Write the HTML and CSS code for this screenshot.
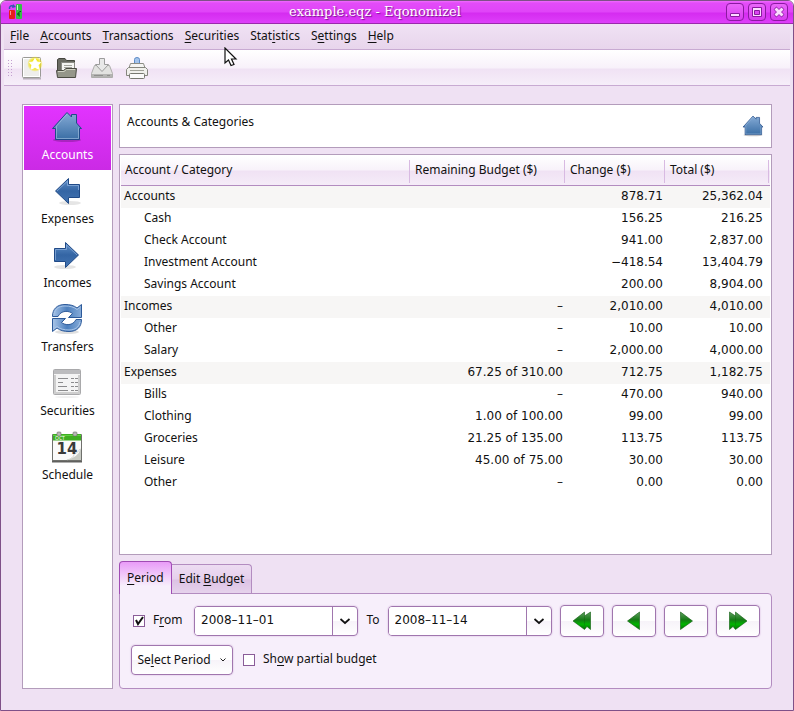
FILE: index.html
```html
<!DOCTYPE html>
<html lang="en">
<head>
  <meta charset="UTF-8">
  <meta name="viewport" content="width=device-width, initial-scale=1.0">
  <title>example.eqz - Eqonomize!</title>
  <link rel="stylesheet" href="styles.css">
</head>
<body>
  <!-- Shared gradients and shapes -->
  <svg class="defs" width="0" height="0" aria-hidden="true">
    <defs>
      <linearGradient id="blue" x1="0" y1="0" x2="0" y2="1">
        <stop offset="0" stop-color="#86abd6"/>
        <stop offset="1" stop-color="#3a6ea5"/>
      </linearGradient>
      <linearGradient id="arrowBlue" x1="0" y1="0" x2="0" y2="1">
        <stop offset="0" stop-color="#5f8fc8"/>
        <stop offset="0.5" stop-color="#3465a4"/>
        <stop offset="1" stop-color="#4374b2"/>
      </linearGradient>
      <linearGradient id="swirlBlue" x1="0" y1="0" x2="1" y2="0">
        <stop offset="0" stop-color="#a9c5e8"/>
        <stop offset="0.5" stop-color="#4d80be"/>
        <stop offset="1" stop-color="#86abd8"/>
      </linearGradient>
      <linearGradient id="green" x1="0" y1="0" x2="0" y2="1">
        <stop offset="0" stop-color="#5f9e5f"/>
        <stop offset="0.45" stop-color="#157a15"/>
        <stop offset="0.7" stop-color="#00b400"/>
        <stop offset="1" stop-color="#067006"/>
      </linearGradient>
      <radialGradient id="glow">
        <stop offset="0.6" stop-color="#f3e51c"/>
        <stop offset="1" stop-color="#f3e51c" stop-opacity="0.2"/>
      </radialGradient>
      <symbol id="home" viewBox="0 0 32 32">
        <ellipse cx="16" cy="29" rx="14" ry="2" fill="#000" opacity="0.2"/>
        <path d="M16 1.500L1.500 17.500H4.500V28.500H28.500V17.500H30.500L25.500 12V3.500H20.500V6Z" fill="url(#blue)" stroke="#204a87" stroke-linejoin="round"/>
        <path d="M16 3L5.500 15V27.500H27.500V16.500" fill="none" stroke="#a9c4e4" opacity="0.6"/>
      </symbol>
    </defs>
  </svg>

  <div class="window">
    <header class="titlebar">
      <svg class="app-icon" width="16" height="16" viewBox="0 0 16 16" aria-hidden="true">
        <path d="M1.500 5C1 2 3 1 6 2.500" fill="none" stroke="#3555b0" stroke-width="1.500"/>
        <path d="M5 0L8 3L4 4Z" fill="#3555b0"/>
        <rect x="1" y="6" width="6" height="9" rx="1" fill="#e81c1c"/>
        <path d="M2.500 7V11" stroke="#ff9090"/>
        <rect x="8" y="0" width="6" height="15" rx="1" fill="#35c048"/>
        <path d="M13 7.500C10 7 9 12 12 12M9 10H12" fill="none" stroke="#0a4a18"/>
        <path d="M9.500 1V6" stroke="#c0ffc8"/>
      </svg>
      <h1>example.eqz - Eqonomizel</h1>
      <div class="window-buttons">
        <button type="button" aria-label="Minimize">
          <svg width="16" height="16" viewBox="0 0 16 16"><path d="M3.500 9.500H12.500V12.500H3.500Z" fill="#fbdcff" stroke="#8a1aa0"/></svg>
        </button>
        <button type="button" aria-label="Maximize">
          <svg width="16" height="16" viewBox="0 0 16 16"><path d="M3.500 3.500H12.500V12.500H3.500Z" fill="#fbdcff" stroke="#8a1aa0"/><path d="M5.500 6.500H10.500V10.500H5.500Z" fill="#dc44f2" stroke="#8a1aa0"/></svg>
        </button>
        <button type="button" aria-label="Close">
          <svg width="16" height="16" viewBox="0 0 16 16"><path d="M4 4L12 12M12 4L4 12" stroke="#8a1aa0" stroke-width="4"/><path d="M4.500 4.500L11.500 11.500M11.500 4.500L4.500 11.500" stroke="#fbdcff" stroke-width="3"/></svg>
        </button>
      </div>
    </header>

    <nav class="menubar">
      <a href="#"><u>F</u>ile</a>
      <a href="#"><u>A</u>ccounts</a>
      <a href="#"><u>T</u>ransactions</a>
      <a href="#"><u>S</u>ecurities</a>
      <a href="#">Stat<u>i</u>stics</a>
      <a href="#">S<u>e</u>ttings</a>
      <a href="#"><u>H</u>elp</a>
    </nav>

    <div class="toolbar">
      <span class="grip"></span>
      <button type="button" aria-label="New">
        <svg width="24" height="24" viewBox="0 0 24 24">
          <path d="M3 22.500H21" stroke="#000" opacity="0.25" stroke-width="2"/>
          <rect x="2.500" y="1.500" width="18" height="20" rx="1" fill="#eeeeec" stroke="#9a9a96"/>
          <rect x="3.500" y="2.500" width="16" height="18" fill="none" stroke="#fff"/>
          <circle cx="15" cy="8" r="7.500" fill="url(#glow)"/>
          <path d="M15 2.500L17 6L20.500 6.500L18.200 9.200L18.700 13L15 11.500L11.300 13L11.800 9.200L9.500 6.500L13 6Z" fill="#fff" stroke="#fff" stroke-linejoin="round"/>
        </svg>
      </button>
      <button type="button" aria-label="Open">
        <svg width="24" height="24" viewBox="0 0 24 24">
          <path d="M2.500 20V3.500L4 2.500H10L11.500 4.500H19.500V16H2.500" fill="#6b6c64" stroke="#45463f"/>
          <rect x="6.500" y="6.500" width="13" height="9" fill="#f4f4f2" stroke="#8a8a84"/>
          <path d="M9 9.500H17M9 11.500H17" stroke="#a4a49e"/>
          <path d="M1.500 14.500H8.500L11 12.500H21.500L20.500 21.500H2.500Z" fill="#95968a" stroke="#4a4b42" stroke-linejoin="round"/>
          <path d="M3 15.500H9L11.500 13.500H20" fill="none" stroke="#d0d1c4"/>
        </svg>
      </button>
      <button type="button" aria-label="Save" disabled>
        <svg width="24" height="24" viewBox="0 0 24 24">
          <path d="M4.500 9.500H19.500L22.500 17.500V21.500H1.500V17.500Z" fill="#e2e2e0" stroke="#adadab" stroke-linejoin="round"/>
          <path d="M2 18H22V21H2Z" fill="#b4b4b2"/>
          <path d="M4 19.500H13M17 19.500H20" stroke="#8f8f8d"/>
          <path d="M9.500 2.500H14.500V8.500H18.500L12 15.500L5.500 8.500H9.500Z" fill="#e8e8e8" stroke="#9c9c9c"/>
        </svg>
      </button>
      <button type="button" aria-label="Print">
        <svg width="24" height="24" viewBox="0 0 24 24">
          <path d="M9.500 8V3.500Q9.500 1.500 12 1.500Q14.500 1.500 14.500 3.500V8Z" fill="#a4c4ec" stroke="#5e8cc6"/>
          <path d="M5.500 7.500H18.500L20 12H4Z" fill="#f5f5f3" stroke="#8c8d85"/>
          <path d="M3.500 11.500H20.500L22.500 13.500V19.500H1.500V13.500Z" fill="#f0f0ec" stroke="#85867e" stroke-linejoin="round"/>
          <path d="M5 14.500H19" stroke="#a0a198"/>
          <rect x="4.500" y="17.500" width="15" height="5" rx="1" fill="#fafafa" stroke="#777870"/>
        </svg>
      </button>
    </div>

    <main class="workspace">
      <nav class="sidebar">
        <a href="#" class="active">
          <svg width="32" height="32"><use href="#home"/></svg>
          Accounts
        </a>
        <a href="#">
          <svg width="32" height="32" viewBox="0 0 32 32">
            <ellipse cx="19" cy="28" rx="11" ry="2" fill="#000" opacity="0.1"/>
            <path d="M4.500 16L17.500 3.500V9.500H28.500V22.500H17.500V28.500Z" fill="url(#arrowBlue)" stroke="#204a87" stroke-linejoin="round"/>
            <path d="M6 16L16.500 6V10.500H27.500V15" fill="none" stroke="#8fb2de" opacity="0.7"/>
          </svg>
          Expenses
        </a>
        <a href="#">
          <svg width="32" height="32" viewBox="0 0 32 32">
            <ellipse cx="14" cy="28" rx="11" ry="2" fill="#000" opacity="0.1"/>
            <path d="M27.500 16L14.500 3.500V9.500H3.500V22.500H14.500V28.500Z" fill="url(#arrowBlue)" stroke="#204a87" stroke-linejoin="round"/>
            <path d="M26 16L15.500 6V10.500H4.500V21" fill="none" stroke="#8fb2de" opacity="0.7"/>
          </svg>
          Incomes
        </a>
        <a href="#">
          <svg width="32" height="32" viewBox="0 0 32 32">
            <ellipse cx="16" cy="29" rx="12" ry="2" fill="#000" opacity="0.12"/>
            <path d="M1.500 13.500C1.500 6 6 1.500 14 1.500C19 1.500 23 2.500 26 5L30.500 1.500V14.500H17.500L21.500 10.500C18 7.500 10 7 7 13.500Z" fill="url(#swirlBlue)" stroke="#2d5a9a" stroke-linejoin="round"/>
            <path d="M3 11C4 6 8 3 14 3C19 3 23 4 26 6.500L29.500 4" fill="none" stroke="#a9c5e8"/>
            <path d="M30.500 16.500C30.500 24 26 28.500 18 28.500C13 28.500 9 27.500 6 25L1.500 28.500V15.500H14.500L10.500 19.500C14 22.500 22 23 25 16.500Z" fill="url(#swirlBlue)" stroke="#2d5a9a" stroke-linejoin="round"/>
            <path d="M29 19C28 24 24 27 18 27C13 27 9 26 6 23.500L2.500 26" fill="none" stroke="#a9c5e8"/>
          </svg>
          Transfers
        </a>
        <a href="#">
          <svg width="32" height="32" viewBox="0 0 32 32">
            <ellipse cx="16" cy="30" rx="12" ry="1" fill="#000" opacity="0.06"/>
            <rect x="2.500" y="2.500" width="27" height="25" rx="1" fill="#f4f4f4" stroke="#a9a9ab"/>
            <path d="M3 3H29V7H3Z" fill="#bcbcbe"/>
            <path d="M4 8V26H28V8" fill="none" stroke="#cecece" stroke-width="2"/>
            <path d="M7 11.500H17M7 15.500H12M7 19.500H16M7 23.500H17" stroke="#8b8b8d"/>
            <path d="M20 11.500H27M20 15.500H27M20 19.500H27M20 23.500H27" stroke="#8b8b8d" stroke-dasharray="3 1"/>
          </svg>
          Securities
        </a>
        <a href="#">
          <svg class="calendar" width="32" height="32" viewBox="0 0 32 32">
            <path d="M1 28H31V31.500H1Z" fill="#60605e"/>
            <path d="M1.500 3.500H30.500V29.500H1.500Z" fill="#fafafa" stroke="#6f706c"/>
            <path d="M2 3H30V9.500H2Z" fill="#3fae22"/>
            <path d="M2 4.500H30" stroke="#5fd040"/>
            <path d="M30 17Q27 27 15 29H30Z" fill="#c8cbc4"/>
            <path d="M29 18Q27 22 23 23Q23 27 16 29" fill="#fff" stroke="#babdb6" stroke-width="0.600"/>
            <rect x="6" y="1" width="4" height="4" rx="1" fill="#b8b8b6" stroke="#6c6c6a" stroke-width="0.600"/>
            <rect x="22" y="1" width="4" height="4" rx="1" fill="#b8b8b6" stroke="#6c6c6a" stroke-width="0.600"/>
            <text class="month" x="4" y="9">OCT</text>
            <text class="day" x="16" y="23" text-anchor="middle">14</text>
          </svg>
          Schedule
        </a>
      </nav>

      <section class="content">
        <div class="page-title">
          <h2>Accounts &amp; Categories</h2>
          <svg width="22" height="22" aria-hidden="true"><use href="#home"/></svg>
        </div>

        <div class="list">
          <table>
            <colgroup>
              <col>
              <col class="col-budget">
              <col class="col-change">
              <col class="col-total">
            </colgroup>
            <thead>
              <tr>
                <th>Account / Category</th>
                <th>Remaining Budget ($)</th>
                <th>Change ($)</th>
                <th>Total ($)</th>
              </tr>
            </thead>
            <tbody>
              <tr class="group"><td>Accounts</td><td></td><td>878.71</td><td>25,362.04</td></tr>
              <tr><td>Cash</td><td></td><td>156.25</td><td>216.25</td></tr>
              <tr><td>Check Account</td><td></td><td>941.00</td><td>2,837.00</td></tr>
              <tr><td>Investment Account</td><td></td><td>−418.54</td><td>13,404.79</td></tr>
              <tr><td>Savings Account</td><td></td><td>200.00</td><td>8,904.00</td></tr>
              <tr class="group"><td>Incomes</td><td>–</td><td>2,010.00</td><td>4,010.00</td></tr>
              <tr><td>Other</td><td>–</td><td>10.00</td><td>10.00</td></tr>
              <tr><td>Salary</td><td>–</td><td>2,000.00</td><td>4,000.00</td></tr>
              <tr class="group"><td>Expenses</td><td>67.25 of 310.00</td><td>712.75</td><td>1,182.75</td></tr>
              <tr><td>Bills</td><td>–</td><td>470.00</td><td>940.00</td></tr>
              <tr><td>Clothing</td><td>1.00 of 100.00</td><td>99.00</td><td>99.00</td></tr>
              <tr><td>Groceries</td><td>21.25 of 135.00</td><td>113.75</td><td>113.75</td></tr>
              <tr><td>Leisure</td><td>45.00 of 75.00</td><td>30.00</td><td>30.00</td></tr>
              <tr><td>Other</td><td>–</td><td>0.00</td><td>0.00</td></tr>
            </tbody>
          </table>
        </div>

        <div class="tabs" role="tablist">
          <button type="button" class="tab selected" role="tab" aria-selected="true"><u>P</u>eriod</button>
          <button type="button" class="tab" role="tab" aria-selected="false">Edit <u>B</u>udget</button>
        </div>

        <form class="period">
          <div class="range">
            <div class="check from">
              <input type="checkbox" id="useFrom" checked>
              <label for="useFrom">F<u>r</u>om</label>
            </div>
            <div class="combo">
              <input type="text" id="dateFrom" value="2008–11–01" aria-label="From date">
              <button type="button" aria-label="Pick from date">
                <svg width="12" height="8" viewBox="0 0 12 8"><path d="M1.500 2L6 6L10.500 2" fill="none" stroke="#111" stroke-width="1.700"/></svg>
              </button>
            </div>
            <label for="dateTo">To</label>
            <div class="combo">
              <input type="text" id="dateTo" value="2008–11–14">
              <button type="button" aria-label="Pick to date">
                <svg width="12" height="8" viewBox="0 0 12 8"><path d="M1.500 2L6 6L10.500 2" fill="none" stroke="#111" stroke-width="1.700"/></svg>
              </button>
            </div>
            <button type="button" class="push" aria-label="Previous year">
              <svg width="20" height="20" viewBox="0 0 20 20"><path d="M18.500 1V18.500L15 15.500L12.500 18.500L1 10L12.500 1V5Z" fill="url(#green)" stroke="#0b5a0b" stroke-width="0.600"/><path d="M12.500 5.500V14.500" stroke="#0b5a0b" opacity="0.3"/></svg>
            </button>
            <button type="button" class="push" aria-label="Previous month">
              <svg width="20" height="20" viewBox="0 0 20 20"><path d="M15.500 1V18.500L3.500 10Z" fill="url(#green)" stroke="#0b5a0b" stroke-width="0.600"/></svg>
            </button>
            <button type="button" class="push" aria-label="Next month">
              <svg width="20" height="20" viewBox="0 0 20 20"><path d="M4.500 1V18.500L16.500 10Z" fill="url(#green)" stroke="#0b5a0b" stroke-width="0.600"/></svg>
            </button>
            <button type="button" class="push" aria-label="Next year">
              <svg width="20" height="20" viewBox="0 0 20 20"><path d="M1.500 1V18.500L5 15.500L7.500 18.500L19 10L7.500 1V5Z" fill="url(#green)" stroke="#0b5a0b" stroke-width="0.600"/><path d="M7.500 5.500V14.500" stroke="#0b5a0b" opacity="0.3"/></svg>
            </button>
          </div>
          <div class="options">
            <button type="button" class="push select-period" aria-haspopup="menu">
              <span>Se<u>l</u>ect Period</span>
              <svg width="8" height="6" viewBox="0 0 8 6"><path d="M1.500 1.500L4 4L6.500 1.500" fill="none" stroke="#222"/></svg>
            </button>
            <div class="check">
              <input type="checkbox" id="partial">
              <label for="partial">Sh<u>o</u>w partial budget</label>
            </div>
          </div>
        </form>
      </section>
    </main>
  </div>

  <svg class="pointer" width="14" height="21" viewBox="0 0 14 21" aria-hidden="true">
    <path d="M1 1V16L4.500 13L7 18.500L10 17.500L7.500 12H12Z" fill="#fff" stroke="#111" stroke-width="1.200"/>
  </svg>
</body>
</html>
```
FILE: styles.css
```css
* {
  box-sizing: border-box;
}
body {
  margin: 0;
  background: #fff;
  color: #111;
  font-family: "Noto Sans", sans-serif;
  font-size: 12px;
  line-height: 16px;
}
h1, h2 {
  margin: 0;
  font-weight: normal;
}
a {
  color: inherit;
  text-decoration: none;
}
button, input {
  font: inherit;
  color: inherit;
}
button {
  padding: 0;
  border: none;
  background: none;
}
svg {
  display: block;
}
u {
  text-underline-offset: 2px;
}
.defs {
  position: absolute;
}
.window {
  display: flex;
  flex-direction: column;
  min-height: 100vh;
  background: #efe1f3;
  border: 1px solid #7f5088;
  border-radius: 6px 6px 0 0;
  overflow: hidden;
}

/* title bar */
.titlebar {
  display: flex;
  align-items: center;
  height: 23px;
  padding: 0 5px 0 7px;
  background: linear-gradient(#f06cff 0, #e34cf8 2px, #e044f8 11px, #d52cf0 12px, #de3efa 100%);
  border-bottom: 1px solid #9a28ac;
}
.titlebar h1 {
  flex: 1;
  text-align: center;
  font-family: "DejaVu Serif", serif;
  font-size: 13px;
  color: #fff;
  text-shadow: 1px 1px 1px #7a1a90;
}
.window-buttons {
  display: flex;
  gap: 4px;
}
.window-buttons button {
  width: 18px;
  height: 18px;
  border: 1px solid #8a1aa0;
  border-radius: 4px;
  background: linear-gradient(#ea66fa, #d83cf0);
}

/* menu bar and toolbar */
.menubar {
  display: flex;
  align-items: center;
  gap: 11px;
  height: 26px;
  margin: 0 3px;
  padding: 0 6px 2px;
  background: linear-gradient(#f0e2f4, #e8d5ec);
  border-bottom: 1px solid #c8aad2;
}
.toolbar {
  display: flex;
  align-items: center;
  gap: 11px;
  height: 36px;
  margin: 0 3px;
  padding: 0 3px;
  background: linear-gradient(#fff 0, #f8f1fa 18px, #f0e2f4 19px, #f6eef9 100%);
  border-bottom: 1px solid #c8aad2;
}
.toolbar .grip {
  width: 5px;
  height: 17px;
  margin-right: -3px;
  background: radial-gradient(circle, #c39fd0 1px, transparent 1px) 0 0 / 3px 3px;
}

/* workspace */
.workspace {
  flex: 1;
  display: flex;
  gap: 6px;
  padding: 18px 21px 21px;
}
.sidebar {
  flex: 0 0 91px;
  padding: 1px;
  background: #fff;
  border: 1px solid #b39cbb;
}
.sidebar a {
  display: flex;
  flex-direction: column;
  align-items: center;
  gap: 4px;
  height: 64px;
  padding-top: 5px;
}
.sidebar svg {
  margin-right: 2px;
}
.sidebar .active {
  color: #fff;
  background: linear-gradient(#e233ff, #cb2ae5);
}
.calendar .month {
  font-size: 5px;
  fill: #fff;
}
.calendar .day {
  font-family: "DejaVu Sans", sans-serif;
  font-size: 15px;
  font-weight: bold;
  fill: #3a3a3a;
}
.content {
  flex: 1;
  min-width: 0;
  display: flex;
  flex-direction: column;
}
.page-title {
  display: flex;
  justify-content: space-between;
  align-items: center;
  height: 44px;
  margin-bottom: 6px;
  padding: 0 7px;
  background: #fff;
  border: 1px solid #b39cbb;
}
.page-title h2 {
  height: 24px;
  font-size: 12px;
}

/* account list */
.list {
  flex: 1;
  padding: 1px;
  background: #fff;
  border: 1px solid #b39cbb;
}
table {
  width: 100%;
  table-layout: fixed;
  border-collapse: separate;
  border-spacing: 0;
}
.col-budget {
  width: 155px;
}
.col-change {
  width: 100px;
}
.col-total {
  width: 104px;
}
th {
  height: 30px;
  padding: 0 4px 2px;
  text-align: left;
  font-weight: normal;
  background:
    linear-gradient(#d8bae2, #d8bae2) right 1px top 4px / 1px 23px no-repeat,
    linear-gradient(#fff 0, #f8f2fa 14px, #f0e2f4 15px, #f5ecf8 100%);
  border-bottom: 1px solid #b38cc0;
}
td {
  height: 22px;
  padding: 0 3px 2px;
  text-align: right;
  font-family: "DejaVu Sans", sans-serif;
}
td:first-child {
  padding-left: 23px;
  text-align: left;
  font-family: "Noto Sans", sans-serif;
}
td:last-child {
  padding-right: 7px;
}
.group td {
  background: #f7f6f5;
}
.group td:first-child {
  padding-left: 3px;
}

/* tabs */
.tabs {
  display: flex;
  align-items: flex-end;
  margin-top: 6px;
}
.tab {
  height: 29px;
  padding: 0 7px;
  border: 1px solid #b38cc0;
  border-left: none;
  border-bottom: none;
  border-radius: 0 4px 0 0;
  background: linear-gradient(#eddcf2 0, #e6d0ec 14px, #dcc2e4 15px, #e6d2ec 100%);
}
.tab.selected {
  z-index: 1;
  height: 33px;
  margin-bottom: -1px;
  border: 1px solid #a04cb4;
  border-bottom: none;
  border-radius: 4px 4px 0 0;
  background: linear-gradient(#e99cf8 0, #f7effb 24px);
}
.period {
  display: flex;
  flex-direction: column;
  gap: 8px;
  padding: 11px 11px 13px;
  background: #f7effb;
  border: 1px solid #b38cc0;
  border-radius: 0 4px 4px 4px;
}
.period label {
  padding-bottom: 2px;
}
.range {
  display: grid;
  grid-template-columns: 55px 1fr auto 1fr repeat(4, 44px);
  gap: 8px;
  align-items: center;
}
.check {
  display: flex;
  align-items: center;
  gap: 8px;
}
.check.from {
  padding-left: 2px;
}
.check input {
  appearance: none;
  width: 12px;
  height: 12px;
  margin: 0;
  background: #fff;
  border: 1px solid #8a5c98;
}
.check input:checked {
  background: #fff url("data:image/svg+xml,%3Csvg xmlns='http://www.w3.org/2000/svg' viewBox='0 0 10 10'%3E%3Cpath d='M2 4L4 8L9 1' fill='none' stroke='%23111' stroke-width='2'/%3E%3C/svg%3E");
}
.combo {
  display: flex;
  min-width: 0;
  height: 30px;
  background: linear-gradient(#fff 50%, #f7f3f9 50%, #fff);
  border: 1px solid #a076ae;
  border-radius: 4px;
  box-shadow: 0 0 1px 1px #ecdcf1;
  overflow: hidden;
}
.combo input {
  flex: 1;
  min-width: 0;
  padding: 0 6px 2px;
  border: none;
  border-right: 1px solid #a076ae;
  background: #fff;
  font-family: "DejaVu Sans", sans-serif;
}
.combo button {
  display: flex;
  align-items: center;
  justify-content: center;
  width: 24px;
}
.push {
  display: flex;
  align-items: center;
  justify-content: center;
  height: 32px;
  border: 1px solid #a076ae;
  border-radius: 4px;
  background: linear-gradient(#fff 50%, #f7f3f9 50%, #fff);
  box-shadow: 0 0 1px 1px #ecdcf1;
}
.options {
  display: flex;
  align-items: center;
  gap: 10px;
}
.select-period {
  gap: 8px;
  width: 102px;
  height: 30px;
}

/* mouse pointer above the menu */
.pointer {
  position: absolute;
  left: 224px;
  top: 47px;
  pointer-events: none;
}
```
